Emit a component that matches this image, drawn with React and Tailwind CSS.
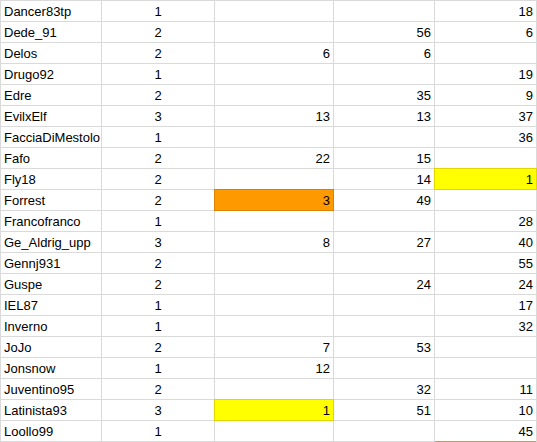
import React from 'react';

// name, count, col3, col4, col5 — highlights keyed by column index
const rows = [
  ['Dancer83tp', 1, '', '', 18],
  ['Dede_91', 2, '', 56, 6],
  ['Delos', 2, 6, 6, ''],
  ['Drugo92', 1, '', '', 19],
  ['Edre', 2, '', 35, 9],
  ['EvilxElf', 3, 13, 13, 37],
  ['FacciaDiMestolo', 1, '', '', 36],
  ['Fafo', 2, 22, 15, ''],
  ['Fly18', 2, '', 14, 1],
  ['Forrest', 2, 3, 49, ''],
  ['Francofranco', 1, '', '', 28],
  ['Ge_Aldrig_upp', 3, 8, 27, 40],
  ['Gennj931', 2, '', '', 55],
  ['Guspe', 2, '', 24, 24],
  ['IEL87', 1, '', '', 17],
  ['Inverno', 1, '', '', 32],
  ['JoJo', 2, 7, 53, ''],
  ['Jonsnow', 1, 12, '', ''],
  ['Juventino95', 2, '', 32, 11],
  ['Latinista93', 3, 1, 51, 10],
  ['Loollo99', 1, '', '', 45],
];

const highlights = {
  'Fly18-4': 'yellow',
  'Forrest-2': 'orange',
  'Latinista93-2': 'yellow',
};

const fills = {
  yellow: 'bg-[#ffff00] relative shadow-[0_0_0_1px_#e3d600]',
  orange: 'bg-[#ff9900] relative shadow-[0_0_0_1px_#d98200]',
};

const Cell = ({ value, align, fill, last }) => (
  <div
    className={`h-5 pt-px px-[3px] leading-[20px] whitespace-nowrap ${
      align === 'left' ? 'text-left' : align === 'center' ? 'text-center' : 'text-right'
    } ${fill ? fills[fill] : 'bg-white'} ${last ? 'relative shadow-[0_1px_0_0_#e69138]' : ''}`}
  >
    {value}
  </div>
);

export default function App() {
  return (
    <div className="w-[537px] h-[442px] bg-white overflow-hidden">
      <div
        className="grid grid-cols-[100px_112px_118px_100px_101px] gap-px bg-[#dadada] p-px w-max text-[13px] text-black"
        style={{ fontFamily: '"Liberation Sans", Arial, sans-serif' }}
      >
        {rows.map((r, i) => (
          <React.Fragment key={r[0]}>
            <Cell value={r[0]} align="left" />
            <Cell value={r[1]} align="center" />
            <Cell value={r[2]} fill={highlights[`${r[0]}-2`]} />
            <Cell value={r[3]} />
            <Cell value={r[4]} fill={highlights[`${r[0]}-4`]} last={i === rows.length - 1} />
          </React.Fragment>
        ))}
      </div>
    </div>
  );
}
